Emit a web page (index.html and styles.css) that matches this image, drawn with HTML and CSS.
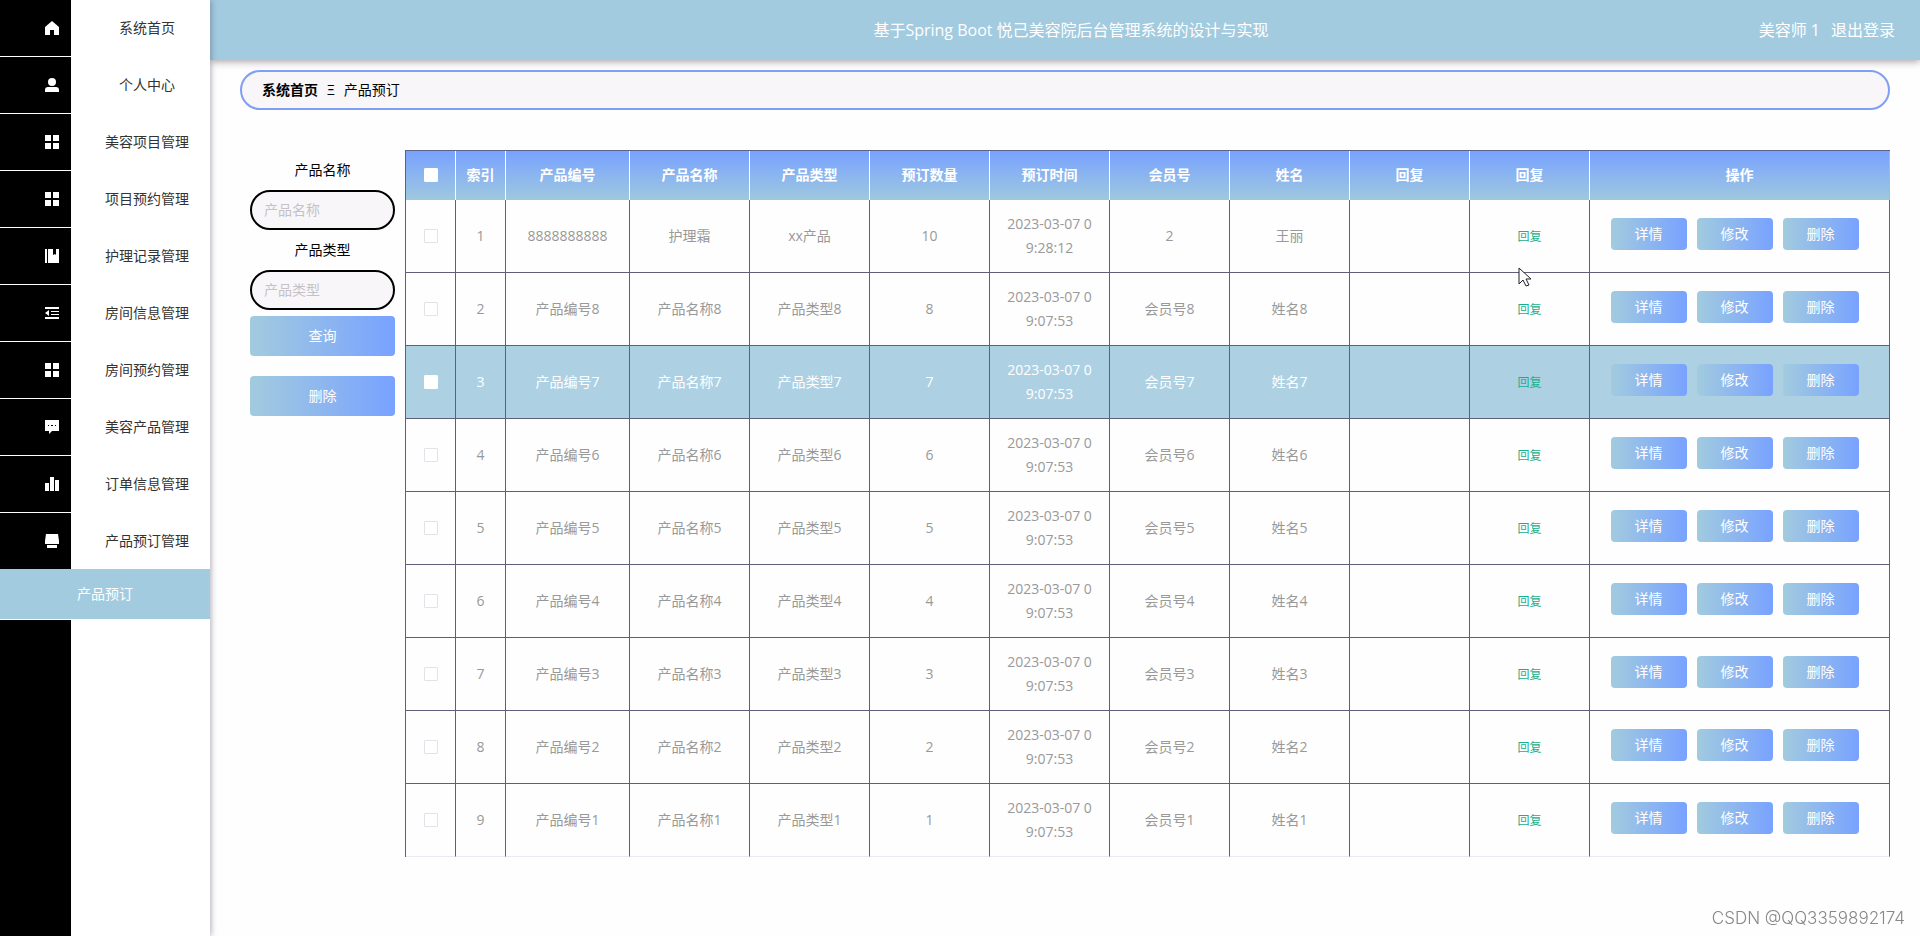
FILE: index.html
```html
<!DOCTYPE html>
<html lang="zh-CN">
<head>
<meta charset="utf-8">
<title>产品预订</title>
<link rel="stylesheet" href="styles.css">
</head>
<body>
<div class="app">
  <nav class="sidebar">
    <ul class="menu" id="menu"></ul>
    <a class="submenu" href="#">产品预订</a>
    <div class="rail"></div>
  </nav>
  <div class="page">
    <header class="topbar">
      <h1 class="topbar-title">基于Spring Boot 悦己美容院后台管理系统的设计与实现</h1>
      <div class="topbar-user"><span>美容师 1</span><a href="#">退出登录</a></div>
    </header>
    <main class="main">
      <div class="crumbs"><a href="#">系统首页</a><span class="crumb-sep">Ξ</span><span>产品预订</span></div>
      <div class="content">
        <form class="search">
          <label for="name">产品名称</label>
          <input id="name" type="text" placeholder="产品名称">
          <label for="type">产品类型</label>
          <input id="type" type="text" placeholder="产品类型">
          <button type="button" class="btn">查询</button>
          <button type="button" class="btn">删除</button>
        </form>
        <table class="grid">
          <colgroup>
            <col class="c-s"><col class="c-s"><col class="c-id"><col class="c-m"><col class="c-m"><col class="c-m"><col class="c-m"><col class="c-m"><col class="c-m"><col class="c-m"><col class="c-m"><col class="c-op">
          </colgroup>
          <thead>
            <tr><th><input type="checkbox" aria-label="全选"></th><th>索引</th><th>产品编号</th><th>产品名称</th><th>产品类型</th><th>预订数量</th><th>预订时间</th><th>会员号</th><th>姓名</th><th>回复</th><th>回复</th><th>操作</th></tr>
          </thead>
          <tbody id="rows"></tbody>
        </table>
      </div>
    </main>
  </div>
</div>
<div class="watermark">CSDN @QQ3359892174</div>
<svg class="cursor" viewBox="0 0 14 20"><path d="M1 1v16l4-4 3 6 3-1-3-6h5z" fill="#fff" stroke="#222" stroke-width="1"/></svg>
<script src="app.js"></script>
</body>
</html>
```
FILE: styles.css
```css
* { box-sizing: border-box; }
body {
  margin: 0;
  background: #fefefe;
  color: #000;
  font: 14px/24px "Open Sans", "Noto Sans CJK SC", sans-serif;
}
a { color: inherit; text-decoration: none; }
button, input { font: inherit; }
.app { display: flex; min-height: 100vh; }

.sidebar {
  position: relative;
  z-index: 1;
  display: flex;
  flex-direction: column;
  flex: 0 0 210px;
  background: #fff;
  box-shadow: 1px 0 6px rgba(60, 50, 80, 0.4);
}
.menu { margin: 0; padding: 0; list-style: none; }
.menu-item { display: flex; height: 57px; }
.menu-icon {
  display: flex;
  align-items: center;
  justify-content: flex-end;
  width: 71px;
  padding-right: 11px;
  background: #000;
  border-bottom: 1px solid #fff;
}
.menu-icon svg { width: 16px; height: 16px; fill: #fff; }
.menu li:last-child .menu-item { height: 56px; }
.menu li:last-child .menu-icon { border-bottom: 0; }
.menu-text { flex: 1; padding-left: 13px; line-height: 55px; text-align: center; color: #333; }
.submenu {
  height: 50px;
  line-height: 50px;
  text-align: center;
  color: #fff;
  background: #a2cbdf;
}
.rail { flex: 1; width: 71px; margin-top: 1px; background: #000; }

.page { flex: 1; min-width: 0; }
.topbar {
  display: grid;
  grid-template-columns: 1fr auto 1fr;
  align-items: center;
  height: 60px;
  padding: 0 25px 0 37px;
  background: #a2cbdf;
  color: #fff;
  font-size: 16px;
  box-shadow: 0 1px 8px rgba(60, 40, 60, 0.5);
}
.topbar-title { grid-column: 2; margin: 0; font-size: 16px; font-weight: 400; }
.topbar-user { display: flex; gap: 11px; justify-content: flex-end; }
.main { padding: 10px 30px; }
.crumbs {
  position: relative;
  display: flex;
  gap: 9px;
  height: 40px;
  padding: 0 20px;
  line-height: 35px;
  background: #f8f6f9;
  border: 2px solid #7f9ff2;
  border-radius: 20px;
}
.crumbs a { font-weight: 700; }
.content { display: flex; align-items: flex-start; gap: 10px; margin-top: 40px; }

.search { display: flex; flex-direction: column; flex: 0 0 155px; padding-left: 10px; }
.search label { line-height: 40px; text-align: center; }
.search input {
  width: 100%;
  height: 40px;
  padding: 0 12px 2px;
  background: #f8f6f9;
  border: 2px solid #000;
  border-radius: 20px;
}
.search input::placeholder { color: #c4c2c6; }
.btn {
  padding: 0;
  color: #fff;
  background: linear-gradient(90deg, #a2cbdf, #78a2ff);
  border: 0;
  border-radius: 4px;
}
.search .btn { height: 40px; margin: 6px 0 14px; }

.grid {
  flex: 1;
  width: 100%;
  table-layout: fixed;
  border-collapse: separate;
  border-spacing: 0;
  border-top: 1px solid #5d6688;
  border-left: 1px solid #5f5f7c;
  text-align: center;
}
.c-s { width: 50px; }
.c-id { width: 124px; }
.c-m { width: 120px; }
.c-op { width: 300px; }
.grid th, .grid td { padding: 0 12px; word-break: break-all; }
.grid th {
  height: 49px;
  padding: 0 0 2px;
  color: #fff;
  border-right: 1px solid #fff;
}
.grid th:last-child { border-right-color: #a2b8df; }
.grid thead { background: linear-gradient(180deg, #78a2ff, #9fc8df); }
.grid td {
  height: 73px;
  color: #999;
  border-right: 1px solid #5f5f7c;
  border-bottom: 1px solid #5f5f7c;
}
.grid tr:last-child td { border-bottom-color: #eee8f4; }
.grid .active td { color: #fff; background: #add1e3; }
.grid input {
  display: block;
  appearance: none;
  width: 14px;
  height: 14px;
  margin: 0 auto;
  background: #fff;
  border: 1px solid #e2e3e8;
  border-radius: 1px;
}
.grid th input, .grid .active input { border-color: #fff; }
.reply { padding: 0; color: #18b08c; background: none; border: 0; font-size: 12px; }
.ops { display: flex; justify-content: center; gap: 10px; padding: 0 10px 4px 0; }
.ops .btn { width: 76px; height: 32px; }

.watermark {
  position: fixed;
  right: 15px;
  bottom: 6px;
  color: #888;
  font: 300 17px/24px Inter, sans-serif;
}
.cursor { position: absolute; left: 1518px; top: 267px; z-index: 2; width: 14px; height: 20px; }
```
FILE: app.js
```js
const icons = {
  home: '<path d="M8 1 1 7v8h5v-5h4v5h5V7z"/>',
  user: '<circle cx="8" cy="5" r="4"/><path d="M1 15v-2q0-3 3-3h8q3 0 3 3v2z"/>',
  grid: '<path d="M1 1h6v6H1zM9 1h6v6H9zM1 9h6v6H1zM9 9h6v6H9z"/>',
  book: '<path d="M1 1h2v14H1zM4 1h5v6l2-1 1 1V1h3v14H4z"/>',
  fold: '<path d="M1 2h14v2H1zM7 6h8v1H7zM7 9h8v1H7zM1 12h14v2H1zM5 5v6L1 8z"/>',
  chat: '<path fill-rule="evenodd" d="M1 1h14v11H8l-3 3v-3H1zM4 6v1h1V6zM7 6v1h2V6zM11 6v1h1V6z"/>',
  bars: '<path d="M1 7h4v8H1zM6 1h4v14H6zM11 4h4v11h-4z"/>',
  shop: '<path d="M2 1h12l1 7v3H1V8zM3 12h10v3H3z"/>'
};
const menu = [
  ['home', '系统首页'], ['user', '个人中心'], ['grid', '美容项目管理'], ['grid', '项目预约管理'],
  ['book', '护理记录管理'], ['fold', '房间信息管理'], ['grid', '房间预约管理'],
  ['chat', '美容产品管理'], ['bars', '订单信息管理'], ['shop', '产品预订管理']
];
document.getElementById('menu').innerHTML = menu.map(([icon, text]) =>
  `<li><a class="menu-item" href="#"><span class="menu-icon"><svg viewBox="0 0 16 16">${icons[icon]}</svg></span><span class="menu-text">${text}</span></a></li>`
).join('');

const rows = [['8888888888', '护理霜', 'xx产品', '10', '2023-03-07 09:28:12', '2', '王丽']];
for (let n = 8; n > 0; n--) {
  rows.push([`产品编号${n}`, `产品名称${n}`, `产品类型${n}`, n, '2023-03-07 09:07:53', `会员号${n}`, `姓名${n}`]);
}
document.getElementById('rows').innerHTML = rows.map((row, i) =>
  `<tr class="${i === 2 ? 'active' : ''}"><td><input type="checkbox" aria-label="选择第${i + 1}行"></td><td>${i + 1}</td>` +
  row.map(cell => `<td>${cell}</td>`).join('') +
  '<td></td><td><button type="button" class="reply">回复</button></td>' +
  '<td><div class="ops"><button type="button" class="btn">详情</button><button type="button" class="btn">修改</button><button type="button" class="btn">删除</button></div></td></tr>'
).join('');
```
